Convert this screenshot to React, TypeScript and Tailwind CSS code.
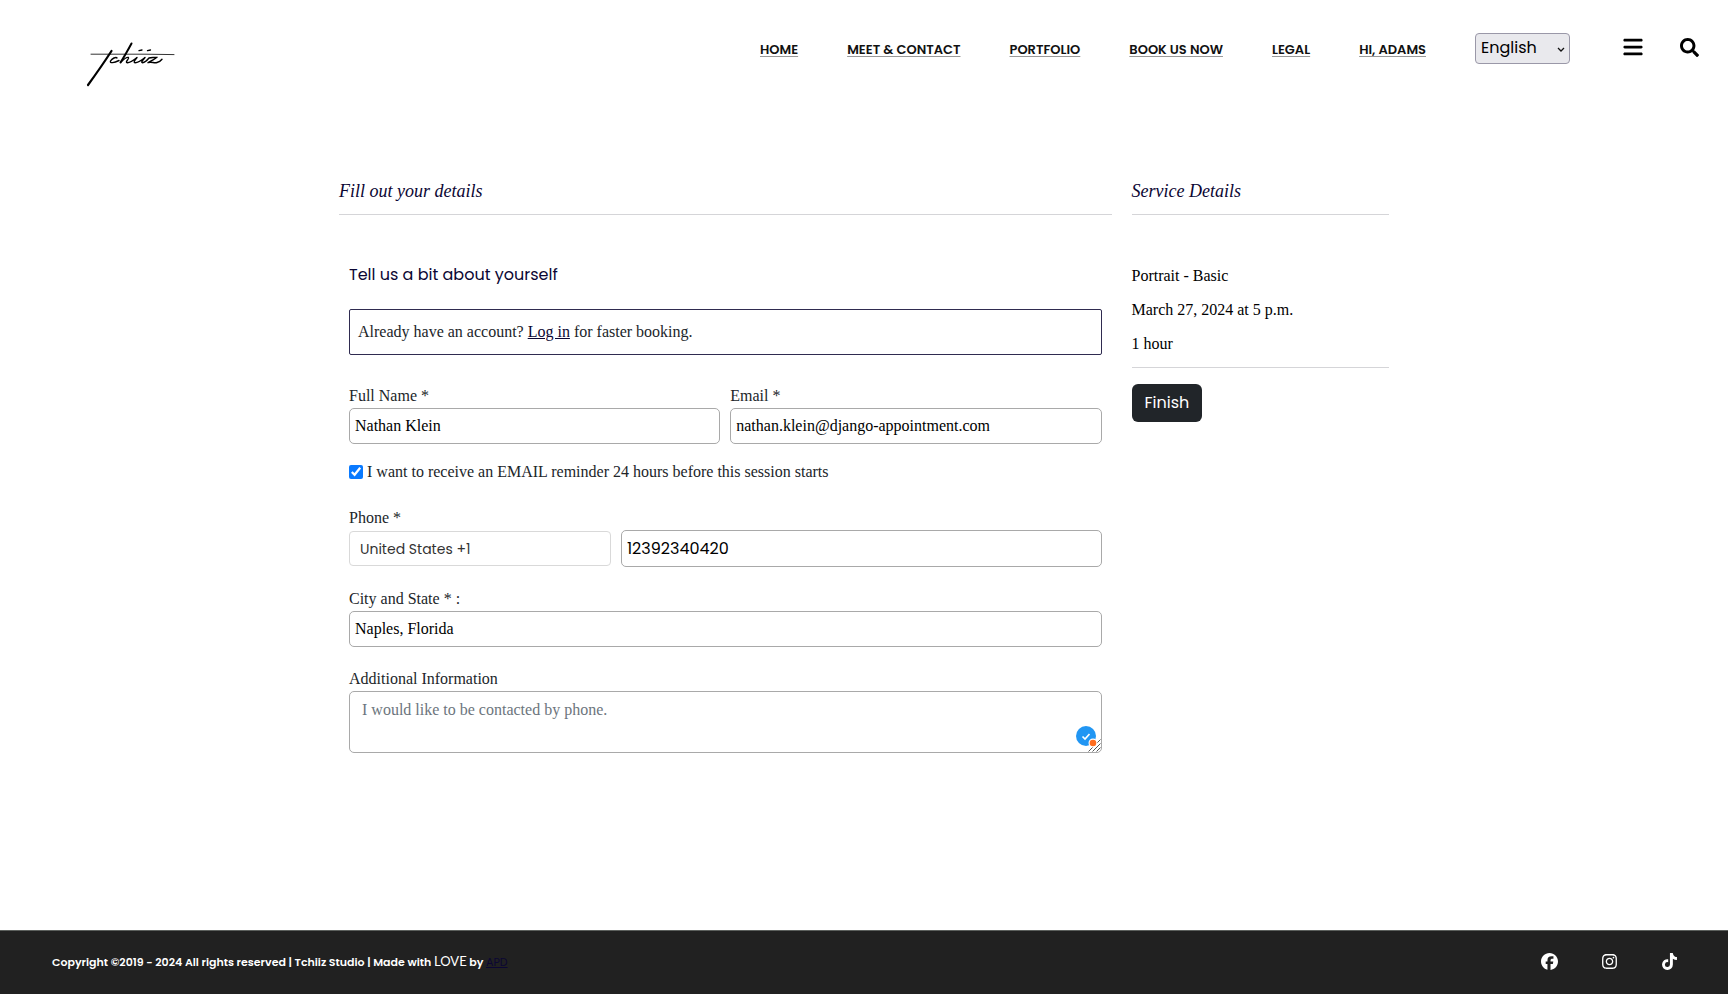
import React from 'react';
import { FaBars, FaFacebook, FaInstagram, FaTiktok } from 'react-icons/fa6';
import { FaSearch } from 'react-icons/fa';

const sans = "font-['Poppins','Inter',sans-serif]";
const script = "font-['Apple_Chancery','Z003','Liberation_Serif',serif] italic";
const heading = `border-b border-[#d5d5d8] pt-0.5 pb-[9px] text-lg leading-7 text-[#0b0633] ${script}`;

const field =
  'block w-full rounded-[5px] border border-[#a9a9a9] bg-white px-[5px] text-base text-black outline-none';

const navItems = ['HOME', 'MEET & CONTACT', 'PORTFOLIO', 'BOOK US NOW', 'LEGAL', 'HI, ADAMS'];

function Logo() {
  return (
    <svg
      viewBox="0 0 90 46"
      className="h-[46px] w-[90px]"
      role="img"
      aria-label="Tchiiz"
      fill="none"
      stroke="#000"
      strokeLinecap="round"
      strokeLinejoin="round"
    >
      <path d="M6 12.200H60L89 12.600" stroke="#333" strokeWidth="1" />
      <path d="M26.500 9C20 19 11 32 3 43" strokeWidth="2.200" />
      <path d="M46.500 1.500C43 8 39 15 35.500 20.500" strokeWidth="2" />
      <path
        d="M32 16C31 14.500 27 16.500 25.500 19C24.500 21.500 29 21 34 18.500M36 20C39 17 42 15 43.500 15.500C44.500 16.500 40 20 42 20.700C45 21 49 18 52 15.500C50 18 48 20.500 50 20.700C53 20.800 57 18 60 15.500C58 18 55.500 20.500 57.500 20.700C60 20.500 62 18.500 64 16C67 15 70 16 72 15.300C70 17 66 19 63 20.700C67 19.500 69 21.500 72 20.500C74 20 76 18.500 77 17.200"
        strokeWidth="1.400"
      />
      <path d="M54 8.700L57 8M62.500 8.700L65.500 8" strokeWidth="1.300" />
    </svg>
  );
}

function Header() {
  return (
    <header className="flex items-start justify-between pt-8 pr-[29px] pl-[85px]">
      <a href="#home" className="mt-2.5">
        <Logo />
      </a>
      <div className="flex h-8 items-center">
        <nav className={`flex gap-[49px] pt-[3px] text-[13px] font-semibold text-[#111] ${sans}`}>
          {navItems.map((item) => (
            <a key={item} href="#nav" className="whitespace-nowrap underline decoration-[#999] underline-offset-2">
              {item}
            </a>
          ))}
        </nav>
        <div className="relative ml-[49px]">
          <select
            aria-label="Language"
            className={`block h-[31px] w-[95px] appearance-none rounded-[4px] border border-[#9a98a8] bg-[#e9e9ed] pl-[5px] text-base text-black ${sans}`}
          >
            <option>English</option>
            <option>Français</option>
          </select>
          <svg viewBox="0 0 8 6" className="pointer-events-none absolute top-3.5 right-[5px] h-1.5 w-2" fill="none" stroke="#111" strokeWidth="1.3">
            <path d="M1 1l3 3 3-3" />
          </svg>
        </div>
        <button aria-label="Menu" className="ml-[52px] pb-0.5">
          <FaBars size={22} />
        </button>
        <button aria-label="Search" className="ml-9 pb-0.5">
          <FaSearch size={19} />
        </button>
      </div>
    </header>
  );
}

function BookingForm() {
  return (
    <section>
      <h2 className={heading}>Fill out your details</h2>
      <form id="booking" className="px-2.5 pt-12 text-base leading-6 text-[#212529]">
        <h3 className={`text-base text-[#0b0633] ${sans}`}>Tell us a bit about yourself</h3>
        <p className="mt-[22px] rounded-[2px] border border-[#2f2b50] px-2 py-2.5">
          Already have an account?{' '}
          <a href="#login" className="text-[#0b0633] underline">
            Log in
          </a>{' '}
          for faster booking.
        </p>
        <div className="mt-[29px] grid grid-cols-2 gap-2.5">
          <div>
            <label htmlFor="name">Full Name *</label>
            <input id="name" className={`${field} h-9`} defaultValue="Nathan Klein" />
          </div>
          <div>
            <label htmlFor="email">Email *</label>
            <input id="email" type="email" className={`${field} h-9`} defaultValue="nathan.klein@django-appointment.com" />
          </div>
        </div>
        <div className="mt-4 flex items-center gap-1">
          <input id="reminder" type="checkbox" defaultChecked className="h-3.5 w-3.5 accent-[#0a7aff]" />
          <label htmlFor="reminder">I want to receive an EMAIL reminder 24 hours before this session starts</label>
        </div>
        <div className="mt-[22px]">
          <label htmlFor="phone">Phone *</label>
          <div className="flex items-center gap-2.5">
            <select
              aria-label="Country code"
              className={`h-[35px] w-[262px] appearance-none rounded-[4px] border border-[#d9d9d9] bg-white px-2.5 text-sm text-[#333] ${sans}`}
            >
              <option>United States +1</option>
            </select>
            <input id="phone" type="tel" className={`${field} h-[37px] flex-1 ${sans}`} defaultValue="12392340420" />
          </div>
        </div>
        <div className="mt-5">
          <label htmlFor="city">City and State * :</label>
          <input id="city" className={`${field} h-9`} defaultValue="Naples, Florida" />
        </div>
        <div className="mt-5">
          <label htmlFor="info">Additional Information</label>
          <div className="relative">
            <textarea
              id="info"
              className="block h-[62px] w-full resize-none rounded-[5px] border border-[#a9a9a9] bg-white px-3 py-1.5 text-base text-black outline-none placeholder:text-[#6c757d]"
              placeholder="I would like to be contacted by phone."
            />
            <svg viewBox="0 0 26 28" className="pointer-events-none absolute right-0 bottom-0 h-7 w-[26px]" fill="none">
              <circle cx="10" cy="11" r="10" fill="#2196f3" />
              <path d="M6.500 11.500l2.500 2.500 4.500-5" stroke="#fff" strokeWidth="1.700" />
              <path d="M12.500 26.500l12-12M16.500 26.500l8-8M20.500 26.500l4-4" stroke="#555" strokeWidth="1" />
              <circle cx="17" cy="18" r="4.500" fill="#fff" />
              <circle cx="17" cy="18" r="3.300" fill="#ff6d1f" />
            </svg>
          </div>
        </div>
      </form>
    </section>
  );
}

function ServiceDetails() {
  return (
    <aside>
      <h2 className={heading}>Service Details</h2>
      <div className="flex flex-col gap-2.5 border-b border-[#d5d5d8] pt-[49px] pb-[11px] text-base leading-6 text-black">
        <p>Portrait - Basic</p>
        <p>March 27, 2024 at 5 p.m.</p>
        <p>1 hour</p>
      </div>
      <button
        type="submit"
        form="booking"
        className={`mt-4 h-[38px] rounded-md bg-[#212529] px-[13px] text-base text-white ${sans}`}
      >
        Finish
      </button>
    </aside>
  );
}

function Footer() {
  return (
    <footer className="mt-auto flex h-16 items-center justify-between border-t border-[#5c605d] bg-[#212121] pr-[50px] pb-0.5 pl-[52px] text-white">
      <p className={`text-[11px] font-semibold ${sans}`}>
        Copyright ©2019 - 2024 All rights reserved | Tchiiz Studio | Made with{' '}
        <span className="font-['Lato',sans-serif] text-[13px] font-normal">LOVE</span> by{' '}
        <a href="#apd" className="font-normal text-[#0b0633] underline">
          APD
        </a>
      </p>
      <div className="flex gap-[43px]">
        <a href="#facebook" aria-label="Facebook"><FaFacebook size={17} /></a>
        <a href="#instagram" aria-label="Instagram"><FaInstagram size={17} /></a>
        <a href="#tiktok" aria-label="TikTok"><FaTiktok size={17} /></a>
      </div>
    </footer>
  );
}

export default function App() {
  return (
    <div className="flex min-h-screen flex-col bg-white font-['Liberation_Serif',serif]">
      <Header />
      <main className="mx-auto mt-[87px] grid w-full max-w-[1050px] grid-cols-[3fr_1fr] gap-5">
        <BookingForm />
        <ServiceDetails />
      </main>
      <Footer />
    </div>
  );
}
